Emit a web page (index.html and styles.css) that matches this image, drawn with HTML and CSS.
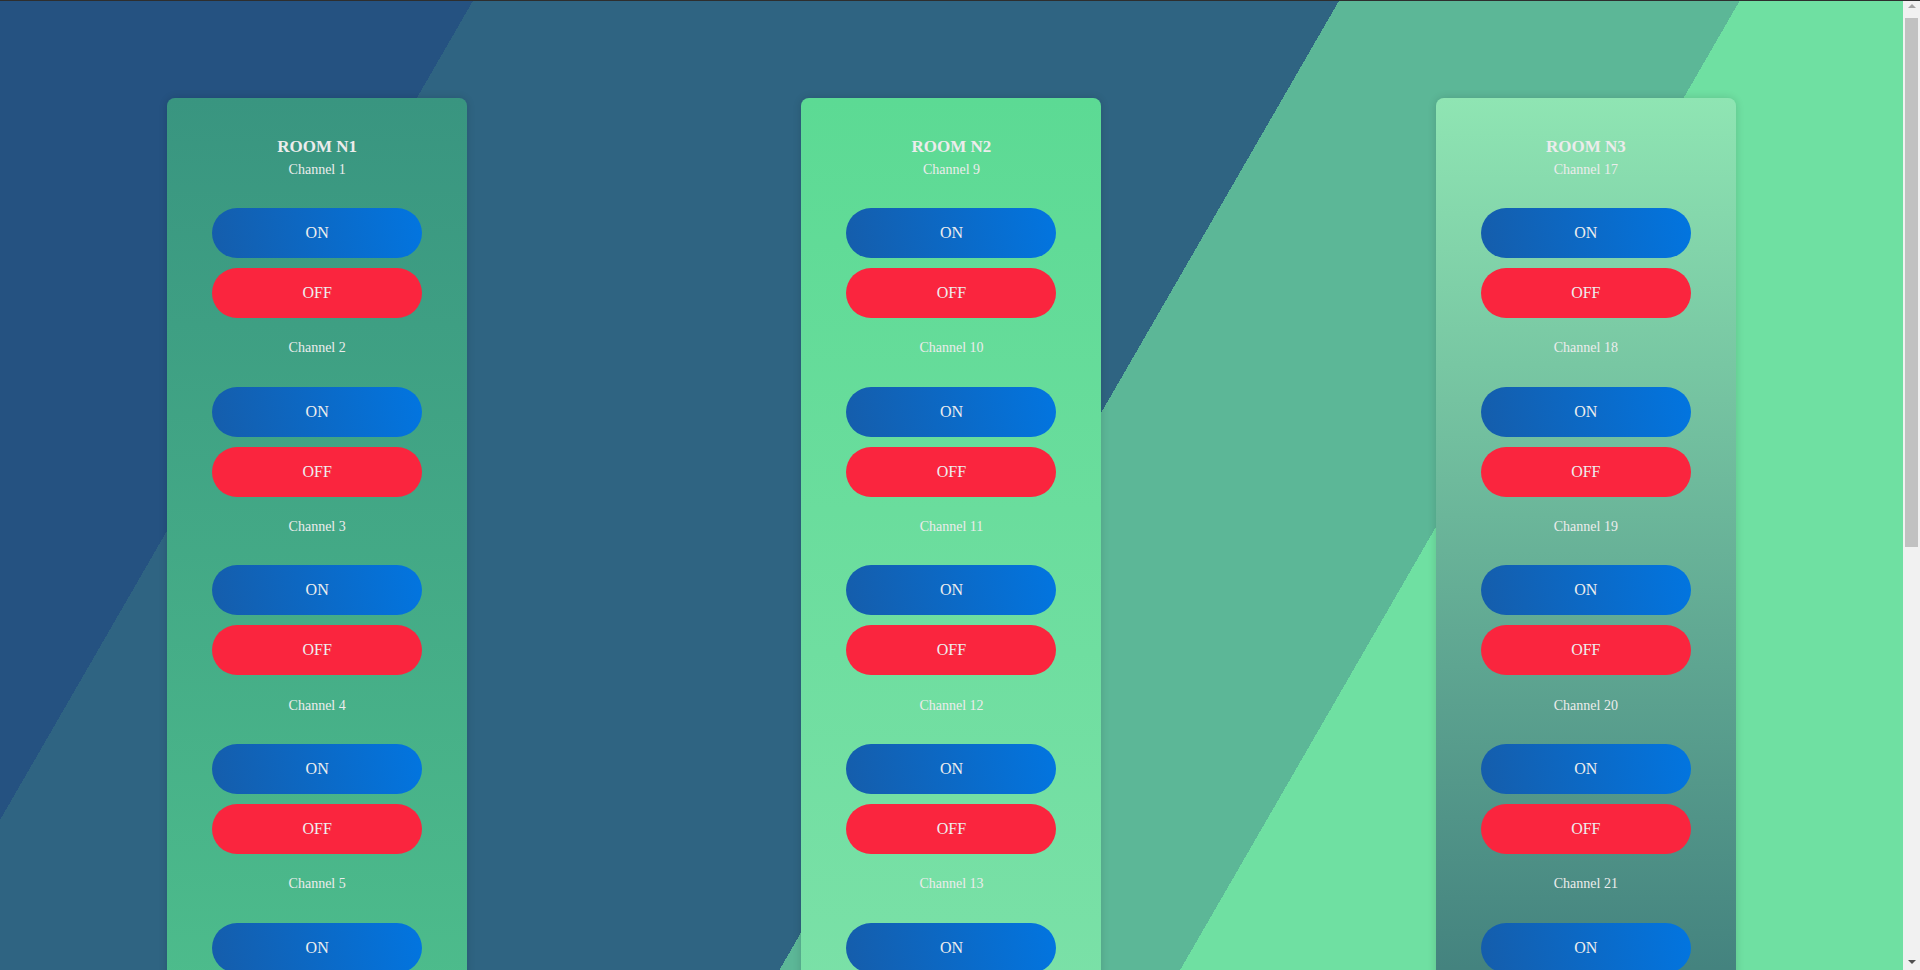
FILE: index.html
```html
<!DOCTYPE html>
<html lang="en">
<head>
<meta charset="utf-8">
<title>Rooms</title>
<link rel="stylesheet" href="styles.css">
</head>
<body>
<div class="topline"></div>
<main class="rooms">
  <section class="room room-1">
    <h3 class="room-title">ROOM N1</h3>
    <div class="channel"><p class="channel-name">Channel 1</p><button class="btn btn-on">ON</button><button class="btn btn-off">OFF</button></div>
    <div class="channel"><p class="channel-name">Channel 2</p><button class="btn btn-on">ON</button><button class="btn btn-off">OFF</button></div>
    <div class="channel"><p class="channel-name">Channel 3</p><button class="btn btn-on">ON</button><button class="btn btn-off">OFF</button></div>
    <div class="channel"><p class="channel-name">Channel 4</p><button class="btn btn-on">ON</button><button class="btn btn-off">OFF</button></div>
    <div class="channel"><p class="channel-name">Channel 5</p><button class="btn btn-on">ON</button><button class="btn btn-off">OFF</button></div>
    <div class="channel"><p class="channel-name">Channel 6</p><button class="btn btn-on">ON</button><button class="btn btn-off">OFF</button></div>
    <div class="channel"><p class="channel-name">Channel 7</p><button class="btn btn-on">ON</button><button class="btn btn-off">OFF</button></div>
    <div class="channel"><p class="channel-name">Channel 8</p><button class="btn btn-on">ON</button><button class="btn btn-off">OFF</button></div>
  </section>
  <section class="room room-2">
    <h3 class="room-title">ROOM N2</h3>
    <div class="channel"><p class="channel-name">Channel 9</p><button class="btn btn-on">ON</button><button class="btn btn-off">OFF</button></div>
    <div class="channel"><p class="channel-name">Channel 10</p><button class="btn btn-on">ON</button><button class="btn btn-off">OFF</button></div>
    <div class="channel"><p class="channel-name">Channel 11</p><button class="btn btn-on">ON</button><button class="btn btn-off">OFF</button></div>
    <div class="channel"><p class="channel-name">Channel 12</p><button class="btn btn-on">ON</button><button class="btn btn-off">OFF</button></div>
    <div class="channel"><p class="channel-name">Channel 13</p><button class="btn btn-on">ON</button><button class="btn btn-off">OFF</button></div>
    <div class="channel"><p class="channel-name">Channel 14</p><button class="btn btn-on">ON</button><button class="btn btn-off">OFF</button></div>
    <div class="channel"><p class="channel-name">Channel 15</p><button class="btn btn-on">ON</button><button class="btn btn-off">OFF</button></div>
    <div class="channel"><p class="channel-name">Channel 16</p><button class="btn btn-on">ON</button><button class="btn btn-off">OFF</button></div>
  </section>
  <section class="room room-3">
    <h3 class="room-title">ROOM N3</h3>
    <div class="channel"><p class="channel-name">Channel 17</p><button class="btn btn-on">ON</button><button class="btn btn-off">OFF</button></div>
    <div class="channel"><p class="channel-name">Channel 18</p><button class="btn btn-on">ON</button><button class="btn btn-off">OFF</button></div>
    <div class="channel"><p class="channel-name">Channel 19</p><button class="btn btn-on">ON</button><button class="btn btn-off">OFF</button></div>
    <div class="channel"><p class="channel-name">Channel 20</p><button class="btn btn-on">ON</button><button class="btn btn-off">OFF</button></div>
    <div class="channel"><p class="channel-name">Channel 21</p><button class="btn btn-on">ON</button><button class="btn btn-off">OFF</button></div>
    <div class="channel"><p class="channel-name">Channel 22</p><button class="btn btn-on">ON</button><button class="btn btn-off">OFF</button></div>
    <div class="channel"><p class="channel-name">Channel 23</p><button class="btn btn-on">ON</button><button class="btn btn-off">OFF</button></div>
    <div class="channel"><p class="channel-name">Channel 24</p><button class="btn btn-on">ON</button><button class="btn btn-off">OFF</button></div>
  </section>
</main>
<div class="scrollbar" aria-hidden="true">
  <div class="scroll-arrow scroll-up"></div>
  <div class="scroll-thumb"></div>
  <div class="scroll-arrow scroll-down"></div>
</div>
</body>
</html>
```

FILE: styles.css
```css
html {
  margin: 0;
  padding: 0;
}

body {
  margin: 0;
  padding: 0;
  font-family: "Liberation Serif", "Times New Roman", serif;
  background: linear-gradient(120deg,
    #255281 0px, #255281 410px,
    #2f6482 410px, #2f6482 1160px,
    #5cb797 1160px, #5cb797 1507px,
    #6fe0a2 1507px);
  background-repeat: no-repeat;
  background-color: #6fe0a2;
}

.topline {
  position: fixed;
  top: 0;
  left: 0;
  right: 0;
  height: 1px;
  background: #2e2e2e;
  z-index: 5;
}

.rooms {
  display: flex;
  justify-content: space-around;
  align-items: flex-start;
  padding: 98px 0;
  margin-right: 17px;
}

.room {
  width: 300px;
  box-sizing: border-box;
  padding: 38.5px 0 27px;
  border-radius: 8px;
  box-shadow: 0 0 8px rgba(0, 0, 0, 0.14);
  display: flex;
  flex-direction: column;
  align-items: center;
  color: #ececec;
}

.room-1 {
  background: linear-gradient(to bottom, #399580, #5bd894);
}

.room-2 {
  background: linear-gradient(to bottom, #5cda94, #90e5b5);
}

.room-3 {
  background: linear-gradient(to bottom, #8fe5b3, #0c3a58);
}

.room-title {
  margin: 0 0 5.3px;
  font-size: 17px;
  line-height: 20px;
  font-weight: bold;
}

.channel {
  display: flex;
  flex-direction: column;
  align-items: center;
  margin-bottom: 21px;
}

.channel-name {
  margin: 0 0 30.17px;
  font-size: 14px;
  line-height: 16px;
}

.channel + .channel .channel-name {
  margin-top: 1.5px;
}

.btn {
  width: 210px;
  height: 50px;
  border: none;
  border-radius: 25px;
  padding: 0;
  font-family: "Liberation Serif", "Times New Roman", serif;
  font-size: 16px;
  color: #eeeeee;
  cursor: pointer;
}

.btn + .btn {
  margin-top: 10px;
}

.btn-on {
  background: linear-gradient(80deg, #155dab, #0275e0);
}

.btn-off {
  background: #fa253e;
}

.scrollbar {
  position: fixed;
  top: 0;
  right: 0;
  bottom: 0;
  width: 17px;
  background: #f1f1f1;
  z-index: 4;
  display: flex;
  flex-direction: column;
  align-items: center;
}

.scroll-arrow {
  width: 17px;
  height: 17px;
  position: relative;
  flex: none;
}

.scroll-arrow::after {
  content: "";
  position: absolute;
  left: 5px;
  border-left: 4px solid transparent;
  border-right: 4px solid transparent;
}

.scroll-up::after {
  top: 4px;
  border-bottom: 4px solid #a3a3a3;
}

.scroll-down::after {
  top: 7px;
  border-top: 4px solid #505050;
}

.scroll-thumb {
  width: 13px;
  height: 529px;
  margin-top: 1px;
  background: #c1c1c1;
  flex: none;
}

.scroll-down {
  margin-top: auto;
}
```
